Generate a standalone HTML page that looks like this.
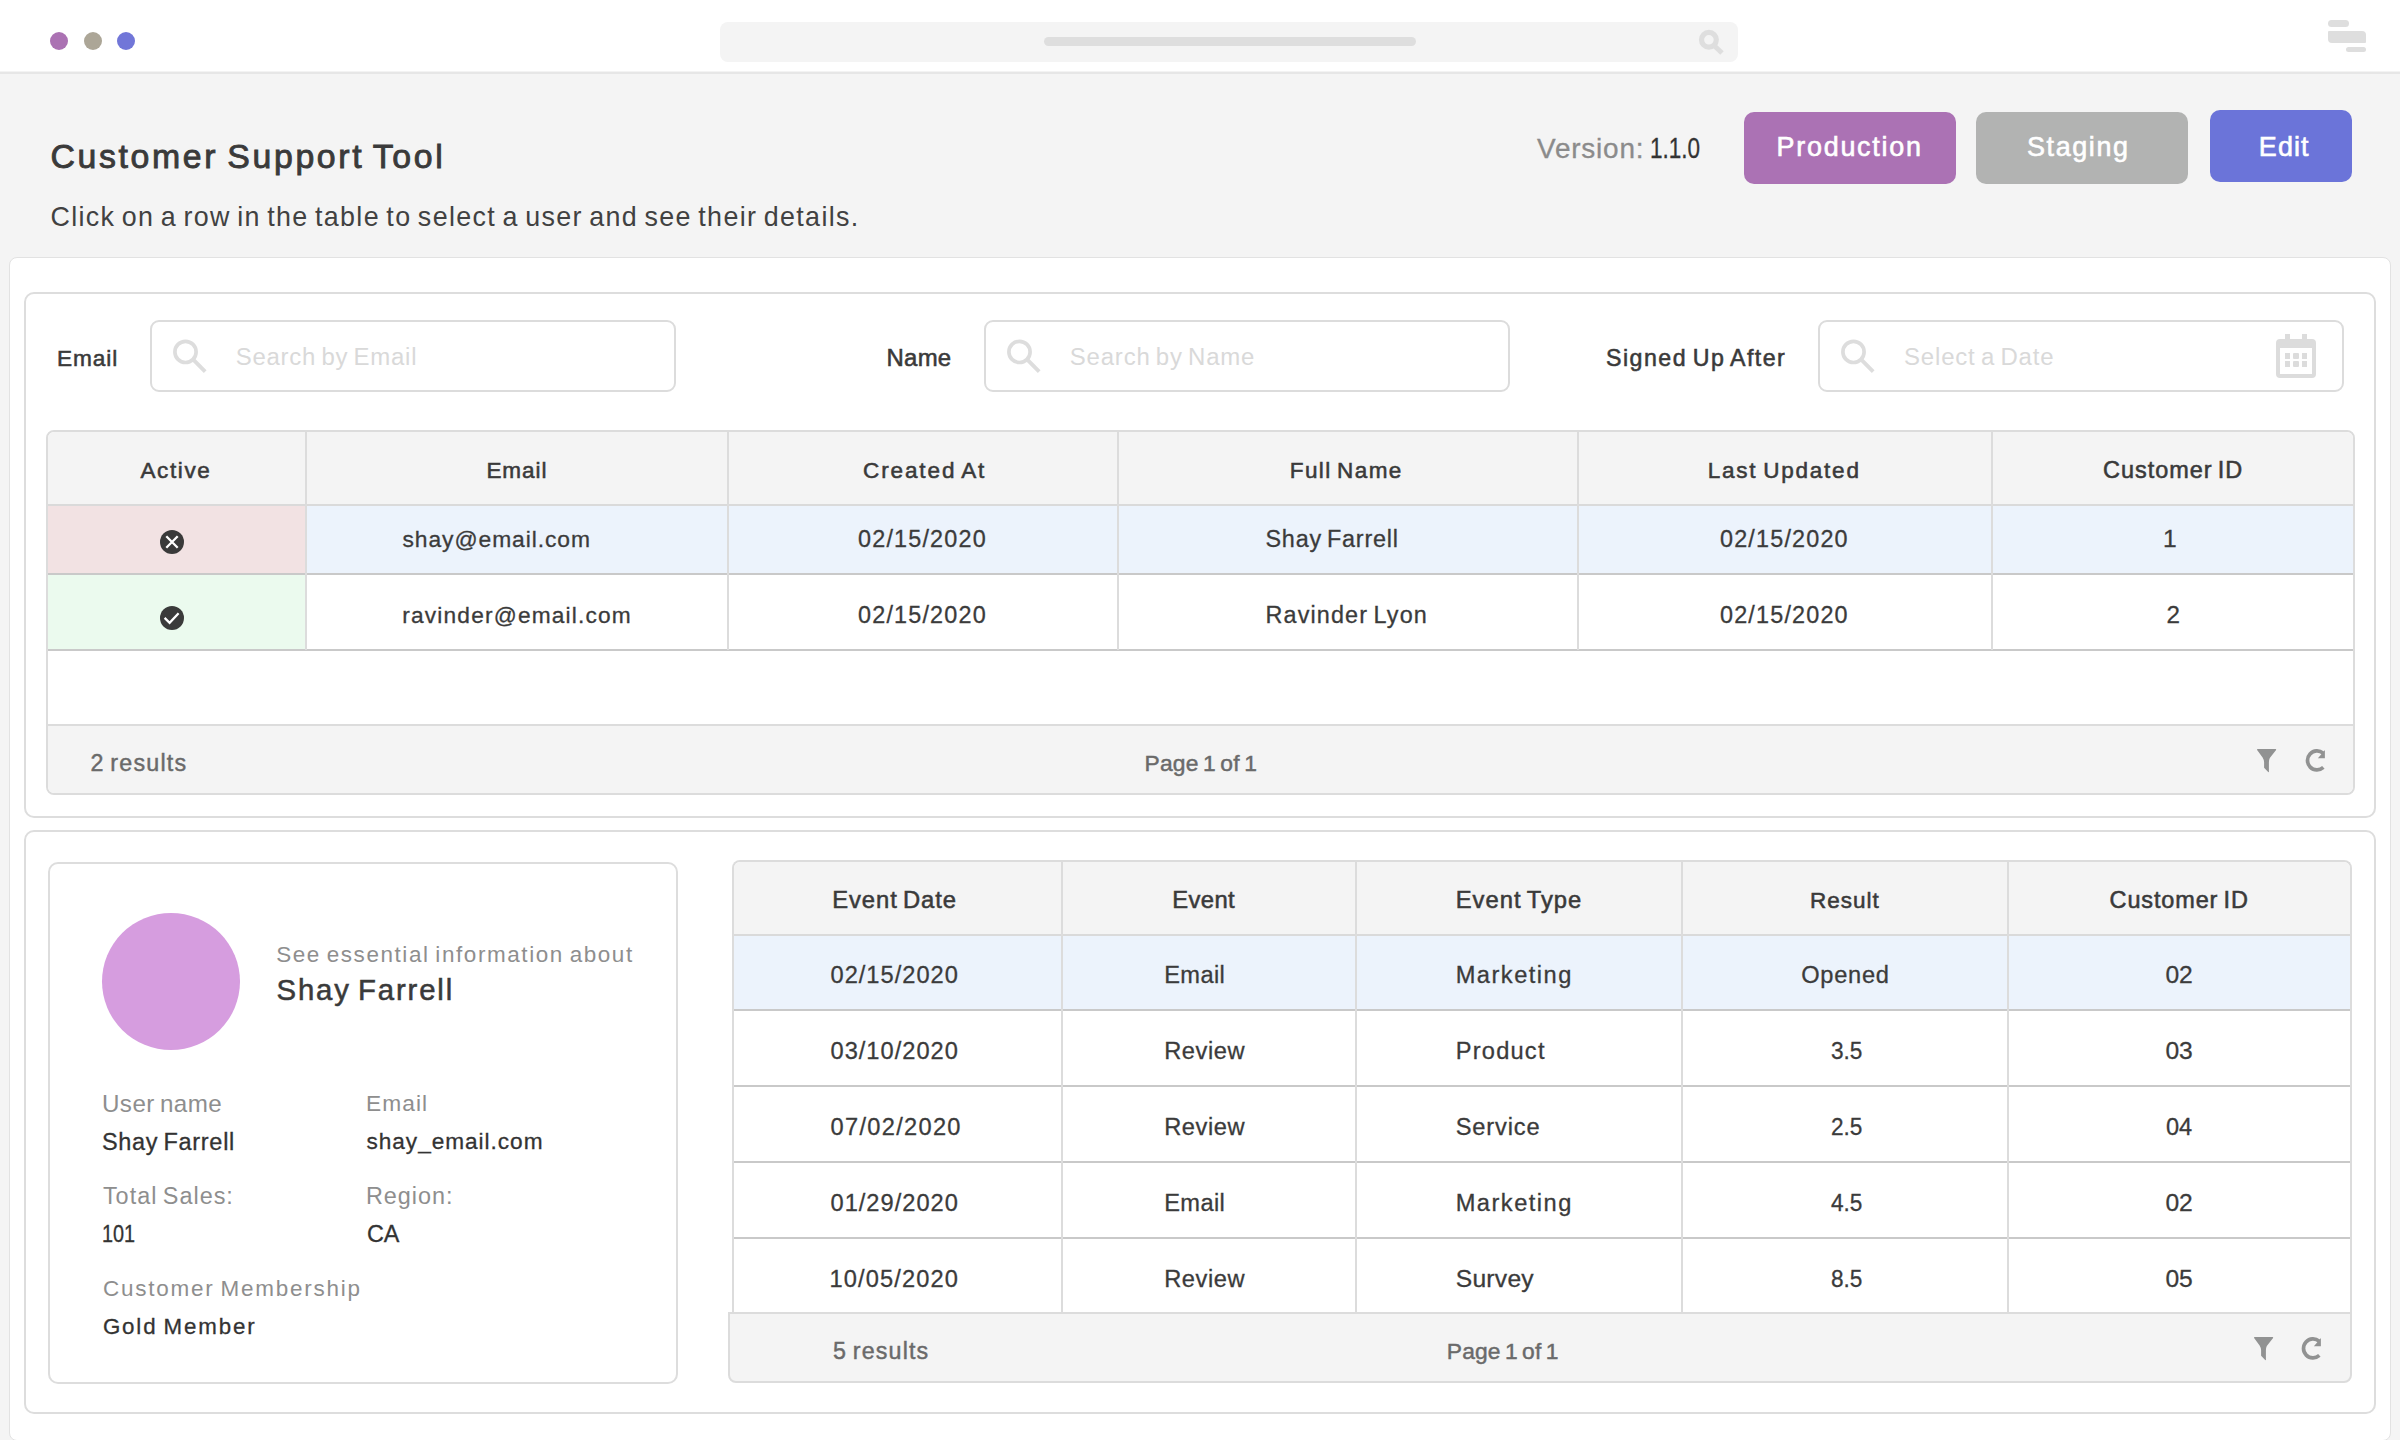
<!DOCTYPE html>
<html><head><meta charset="utf-8"><title>Customer Support Tool</title>
<style>
html,body{margin:0;padding:0;width:2400px;height:1440px;overflow:hidden}
body{width:2400px;height:1440px;overflow:hidden;position:relative;background:#f4f4f4;font-family:"Liberation Sans",sans-serif}
div{position:absolute;box-sizing:content-box}
.t{white-space:nowrap;word-spacing:-0.09em}
</style></head><body>
<div id="root" style="position:relative;left:0;top:0;width:2400px;height:1440px;overflow:hidden">
<div style="left:0px;top:0px;width:2400px;height:72px;background:#fff"></div>
<div style="left:0px;top:71px;width:2400px;height:1px;background:#f3f3f3"></div>
<div style="left:0px;top:72px;width:2400px;height:2px;background:#e6e6e6"></div>
<div style="left:50px;top:32px;width:18px;height:18px;background:#ab72b3;border-radius:50%"></div>
<div style="left:84px;top:32px;width:18px;height:18px;background:#aca697;border-radius:50%"></div>
<div style="left:117px;top:32px;width:18px;height:18px;background:#7176d8;border-radius:50%"></div>
<div style="left:720px;top:22px;width:1018px;height:40px;background:#f4f4f4;border-radius:8px"></div>
<div style="left:1044px;top:37px;width:372px;height:9px;background:#dedede;border-radius:5px"></div>
<svg style="position:absolute;left:1698px;top:28px" width="30" height="30" viewBox="0 0 30 30"><circle cx="10.9" cy="11.8" r="7.4" fill="none" stroke="#dedede" stroke-width="5.2"/><line x1="15.5" y1="17" x2="24" y2="25" stroke="#dedede" stroke-width="5"/></svg>
<div style="left:2328px;top:20px;width:21px;height:7px;background:#dedede;border-radius:4px"></div>
<div style="left:2328px;top:31px;width:38px;height:12px;background:#dedede;border-radius:1px 4px 1px 4px"></div>
<div style="left:2346px;top:47px;width:20px;height:5px;background:#dedede;border-radius:3px"></div>
<div style="left:9px;top:257px;width:2380px;height:1182px;background:#fff;border:1px solid #e2e2e2;border-radius:8px"></div>
<div style="left:24px;top:292px;width:2348px;height:522px;background:#fff;border:2px solid #dddddd;border-radius:10px"></div>
<div style="left:150px;top:320px;width:522px;height:68px;background:#fff;border:2px solid #dcdcdc;border-radius:9px"></div>
<div style="left:984px;top:320px;width:522px;height:68px;background:#fff;border:2px solid #dcdcdc;border-radius:9px"></div>
<div style="left:1818px;top:320px;width:522px;height:68px;background:#fff;border:2px solid #dcdcdc;border-radius:9px"></div>
<svg style="position:absolute;left:172px;top:339px" width="40" height="40" viewBox="0 0 40 40"><circle cx="13.5" cy="12.9" r="10.6" fill="none" stroke="#dddddd" stroke-width="3.7"/><line x1="21" y1="20.4" x2="33.2" y2="32.6" stroke="#dddddd" stroke-width="3.9"/></svg>
<svg style="position:absolute;left:1006px;top:339px" width="40" height="40" viewBox="0 0 40 40"><circle cx="13.5" cy="12.9" r="10.6" fill="none" stroke="#dddddd" stroke-width="3.7"/><line x1="21" y1="20.4" x2="33.2" y2="32.6" stroke="#dddddd" stroke-width="3.9"/></svg>
<svg style="position:absolute;left:1840px;top:339px" width="40" height="40" viewBox="0 0 40 40"><circle cx="13.5" cy="12.9" r="10.6" fill="none" stroke="#dddddd" stroke-width="3.7"/><line x1="21" y1="20.4" x2="33.2" y2="32.6" stroke="#dddddd" stroke-width="3.9"/></svg>
<svg style="position:absolute;left:2276px;top:334px" width="40" height="44" viewBox="0 0 40 44"><rect x="9" y="0" width="5" height="8" fill="#dcdcdc"/><rect x="26" y="0" width="5" height="8" fill="#dcdcdc"/><path d="M4 5 H36 A4 4 0 0 1 40 9 V40 A4 4 0 0 1 36 44 H4 A4 4 0 0 1 0 40 V9 A4 4 0 0 1 4 5 Z M4 14 V40 H36 V14 Z" fill="#dcdcdc" fill-rule="evenodd"/><rect x="9" y="19" width="5" height="6" fill="#dcdcdc"/><rect x="17" y="19" width="6" height="6" rx="1" fill="#dcdcdc"/><rect x="26" y="19" width="5" height="6" fill="#dcdcdc"/><rect x="9" y="27" width="5" height="6" fill="#dcdcdc"/><rect x="17" y="27" width="6" height="6" rx="1" fill="#dcdcdc"/><rect x="26" y="27" width="5" height="6" fill="#dcdcdc"/></svg>
<div style="left:46px;top:430px;width:2305px;height:361px;border:2px solid #dcdcdc;border-radius:8px;overflow:hidden;background:#fff"><div style="left:0px;top:0px;width:2305px;height:72px;background:#f4f4f4"></div><div style="left:0px;top:72px;width:2305px;height:2px;background:#dadada"></div><div style="left:0px;top:74px;width:257px;height:67px;background:#f2e2e3"></div><div style="left:259px;top:74px;width:2046px;height:67px;background:#ecf3fc"></div><div style="left:0px;top:141px;width:2305px;height:2px;background:#c9c9c9"></div><div style="left:0px;top:143px;width:257px;height:74px;background:#ebfaee"></div><div style="left:0px;top:217px;width:2305px;height:2px;background:#c9c9c9"></div><div style="left:0px;top:292px;width:2305px;height:2px;background:#dcdcdc"></div><div style="left:0px;top:294px;width:2305px;height:70px;background:#f4f4f4"></div><div style="left:257px;top:0px;width:2px;height:218px;background:#dcdcdc"></div><div style="left:679px;top:0px;width:2px;height:218px;background:#dcdcdc"></div><div style="left:1069px;top:0px;width:2px;height:218px;background:#dcdcdc"></div><div style="left:1529px;top:0px;width:2px;height:218px;background:#dcdcdc"></div><div style="left:1943px;top:0px;width:2px;height:218px;background:#dcdcdc"></div></div>
<svg style="position:absolute;left:160px;top:530px" width="24" height="24" viewBox="0 0 24 24"><circle cx="12" cy="12" r="12" fill="#3a3a3a"/><path d="M6.3 6.3 L17.7 17.7 M17.7 6.3 L6.3 17.7" stroke="#fff" stroke-width="2.3"/></svg>
<svg style="position:absolute;left:160px;top:606px" width="24" height="24" viewBox="0 0 24 24"><circle cx="12" cy="12" r="12" fill="#3a3a3a"/><path d="M4.6 11.9 L9.6 16.8 L18.6 7.3" fill="none" stroke="#fff" stroke-width="2.3"/></svg>
<svg style="position:absolute;left:2257px;top:749px" width="22" height="26" viewBox="0 0 22 26"><path d="M0.6 0 H18.6 Q19.3 0 19.1 0.9 L12.8 9.1 Q11.9 10.8 11.9 13.4 V22.9 L11.4 23.2 L7.1 18.8 V13.2 Q7.1 10.8 5.6 8.4 L0.1 1.1 Q-0.2 0 0.6 0 Z" fill="#919292"/></svg>
<svg style="position:absolute;left:2304px;top:748px" width="24" height="26" viewBox="0 0 24 26"><path d="M19.36 19.46 A9.5 9.5 0 1 1 19.11 5.12" fill="none" stroke="#919292" stroke-width="3.7"/><path d="M13.9 10.3 H20.9 V2.0 Z" fill="#919292"/></svg>
<div style="left:24px;top:830px;width:2348px;height:580px;background:#fff;border:2px solid #dddddd;border-radius:10px"></div>
<div style="left:48px;top:862px;width:626px;height:518px;background:#fff;border:2px solid #dddddd;border-radius:10px"></div>
<div style="left:102px;top:913px;width:138px;height:137px;background:#d69ddf;border-radius:50%"></div>
<div style="left:732px;top:860px;width:1616px;height:480px;border:2px solid #dcdcdc;border-bottom:none;border-radius:8px 8px 0 0;overflow:hidden;background:#fff"><div style="left:0px;top:0px;width:1616px;height:72px;background:#f4f4f4"></div><div style="left:0px;top:72px;width:1616px;height:2px;background:#dadada"></div><div style="left:0px;top:74px;width:1616px;height:73px;background:#ecf3fc"></div><div style="left:0px;top:147px;width:1616px;height:2px;background:#c9c9c9"></div><div style="left:0px;top:223px;width:1616px;height:2px;background:#c9c9c9"></div><div style="left:0px;top:299px;width:1616px;height:2px;background:#c9c9c9"></div><div style="left:0px;top:375px;width:1616px;height:2px;background:#c9c9c9"></div><div style="left:327px;top:0px;width:2px;height:452px;background:#dcdcdc"></div><div style="left:621px;top:0px;width:2px;height:452px;background:#dcdcdc"></div><div style="left:947px;top:0px;width:2px;height:452px;background:#dcdcdc"></div><div style="left:1273px;top:0px;width:2px;height:452px;background:#dcdcdc"></div></div>
<div style="left:728px;top:1312px;width:1620px;height:67px;background:#f4f4f4;border:2px solid #dcdcdc;border-radius:0 0 8px 8px"></div>
<svg style="position:absolute;left:2254px;top:1337px" width="22" height="26" viewBox="0 0 22 26"><path d="M0.6 0 H18.6 Q19.3 0 19.1 0.9 L12.8 9.1 Q11.9 10.8 11.9 13.4 V22.9 L11.4 23.2 L7.1 18.8 V13.2 Q7.1 10.8 5.6 8.4 L0.1 1.1 Q-0.2 0 0.6 0 Z" fill="#919292"/></svg>
<svg style="position:absolute;left:2300px;top:1336px" width="24" height="26" viewBox="0 0 24 26"><path d="M19.36 19.46 A9.5 9.5 0 1 1 19.11 5.12" fill="none" stroke="#919292" stroke-width="3.7"/><path d="M13.9 10.3 H20.9 V2.0 Z" fill="#919292"/></svg>
<div style="left:1744px;top:112px;width:212px;height:72px;background:#ab72b4;border-radius:10px"></div>
<div style="left:1976px;top:112px;width:212px;height:72px;background:#b2b3b2;border-radius:10px"></div>
<div style="left:2210px;top:110px;width:142px;height:72px;background:#6b74d9;border-radius:10px"></div>
<div class="t" style="left:50.4px;top:140.1px;font-size:33.82px;line-height:33.82px;letter-spacing:2.66px;color:#3a3a3a;-webkit-text-stroke:0.9px #3a3a3a;">Customer Support Tool</div>
<div class="t" style="left:50.4px;top:203.9px;font-size:26.85px;line-height:26.85px;letter-spacing:1.359px;color:#414141;">Click on a row in the table to select a user and see their details.</div>
<div class="t" style="left:1537px;top:135.3px;font-size:27.97px;line-height:27.97px;letter-spacing:0.786px;color:#8b8b8b;-webkit-text-stroke:0.3px #8b8b8b;">Version:</div>
<div class="t" style="left:1649.5px;top:134.3px;font-size:29.15px;line-height:29.15px;letter-spacing:0.0px;color:#333333;-webkit-text-stroke:0.3px #333333;transform:scaleX(0.7734);transform-origin:0 0;">1.1.0</div>
<div class="t" style="left:1776.6px;top:133.9px;font-size:26.93px;line-height:26.93px;letter-spacing:1.733px;color:#ffffff;-webkit-text-stroke:0.6px #ffffff;">Production</div>
<div class="t" style="left:2027px;top:133.9px;font-size:26.93px;line-height:26.93px;letter-spacing:1.617px;color:#ffffff;-webkit-text-stroke:0.6px #ffffff;">Staging</div>
<div class="t" style="left:2258.8px;top:133.9px;font-size:26.93px;line-height:26.93px;letter-spacing:1.133px;color:#ffffff;-webkit-text-stroke:0.6px #ffffff;">Edit</div>
<div class="t" style="left:57px;top:347.2px;font-size:22.67px;line-height:22.67px;letter-spacing:0.925px;color:#3a3a3a;-webkit-text-stroke:0.55px #3a3a3a;">Email</div>
<div class="t" style="left:235.7px;top:344.5px;font-size:23.97px;line-height:23.97px;letter-spacing:0.757px;color:#d9d9d9;">Search by Email</div>
<div class="t" style="left:886.5px;top:346.2px;font-size:23.94px;line-height:23.94px;letter-spacing:0.267px;color:#3a3a3a;-webkit-text-stroke:0.55px #3a3a3a;">Name</div>
<div class="t" style="left:1069.8px;top:344.5px;font-size:23.97px;line-height:23.97px;letter-spacing:0.8px;color:#d9d9d9;">Search by Name</div>
<div class="t" style="left:1606px;top:347.4px;font-size:23.2px;line-height:23.2px;letter-spacing:1.471px;color:#3a3a3a;-webkit-text-stroke:0.55px #3a3a3a;">Signed Up After</div>
<div class="t" style="left:1904px;top:344.5px;font-size:23.97px;line-height:23.97px;letter-spacing:0.833px;color:#d9d9d9;">Select a Date</div>
<div class="t" style="left:140.4px;top:460.3px;font-size:22.53px;line-height:22.53px;letter-spacing:1.62px;color:#3a3a3a;-webkit-text-stroke:0.55px #3a3a3a;">Active</div>
<div class="t" style="left:486.4px;top:460.3px;font-size:22.53px;line-height:22.53px;letter-spacing:0.95px;color:#3a3a3a;-webkit-text-stroke:0.55px #3a3a3a;">Email</div>
<div class="t" style="left:863px;top:460.3px;font-size:22.53px;line-height:22.53px;letter-spacing:1.889px;color:#3a3a3a;-webkit-text-stroke:0.55px #3a3a3a;">Created At</div>
<div class="t" style="left:1289.8px;top:460.3px;font-size:22.53px;line-height:22.53px;letter-spacing:1.363px;color:#3a3a3a;-webkit-text-stroke:0.55px #3a3a3a;">Full Name</div>
<div class="t" style="left:1707.8px;top:460.3px;font-size:22.53px;line-height:22.53px;letter-spacing:1.745px;color:#3a3a3a;-webkit-text-stroke:0.55px #3a3a3a;">Last Updated</div>
<div class="t" style="left:2103px;top:459.3px;font-size:23.47px;line-height:23.47px;letter-spacing:0.97px;color:#3a3a3a;-webkit-text-stroke:0.55px #3a3a3a;">Customer ID</div>
<div class="t" style="left:402.5px;top:527.9px;font-size:22.84px;line-height:22.84px;letter-spacing:0.931px;color:#3b3b3b;-webkit-text-stroke:0.3px #3b3b3b;">shay@email.com</div>
<div class="t" style="left:858px;top:528.3px;font-size:23.38px;line-height:23.38px;letter-spacing:1.189px;color:#3b3b3b;-webkit-text-stroke:0.3px #3b3b3b;">02/15/2020</div>
<div class="t" style="left:1265.5px;top:528.3px;font-size:23.38px;line-height:23.38px;letter-spacing:0.773px;color:#3b3b3b;-webkit-text-stroke:0.3px #3b3b3b;">Shay Farrell</div>
<div class="t" style="left:1720px;top:528.3px;font-size:23.38px;line-height:23.38px;letter-spacing:1.178px;color:#3b3b3b;-webkit-text-stroke:0.3px #3b3b3b;">02/15/2020</div>
<div class="t" style="left:2163.1px;top:527.1px;font-size:24.57px;line-height:24.57px;letter-spacing:0px;color:#3b3b3b;-webkit-text-stroke:0.3px #3b3b3b;">1</div>
<div class="t" style="left:402.3px;top:603.9px;font-size:22.7px;line-height:22.7px;letter-spacing:1.176px;color:#3b3b3b;-webkit-text-stroke:0.3px #3b3b3b;">ravinder@email.com</div>
<div class="t" style="left:858px;top:604.3px;font-size:23.38px;line-height:23.38px;letter-spacing:1.189px;color:#3b3b3b;-webkit-text-stroke:0.3px #3b3b3b;">02/15/2020</div>
<div class="t" style="left:1265.5px;top:604.3px;font-size:23.38px;line-height:23.38px;letter-spacing:1.125px;color:#3b3b3b;-webkit-text-stroke:0.3px #3b3b3b;">Ravinder Lyon</div>
<div class="t" style="left:1720px;top:604.3px;font-size:23.38px;line-height:23.38px;letter-spacing:1.178px;color:#3b3b3b;-webkit-text-stroke:0.3px #3b3b3b;">02/15/2020</div>
<div class="t" style="left:2166.4px;top:603.2px;font-size:24.23px;line-height:24.23px;letter-spacing:0px;color:#3b3b3b;-webkit-text-stroke:0.3px #3b3b3b;">2</div>
<div class="t" style="left:90.6px;top:752.0px;font-size:23.31px;line-height:23.31px;letter-spacing:1.206px;color:#6a6a6a;-webkit-text-stroke:0.45px #6a6a6a;">2 results</div>
<div class="t" style="left:1144.6px;top:751.9px;font-size:22.84px;line-height:22.84px;letter-spacing:0.17px;color:#6a6a6a;-webkit-text-stroke:0.45px #6a6a6a;">Page 1 of 1</div>
<div class="t" style="left:276.2px;top:943.7px;font-size:22.47px;line-height:22.47px;letter-spacing:1.577px;color:#8e8e8e;">See essential information about</div>
<div class="t" style="left:276.5px;top:975.0px;font-size:29.33px;line-height:29.33px;letter-spacing:1.836px;color:#3a3a3a;-webkit-text-stroke:0.55px #3a3a3a;">Shay Farrell</div>
<div class="t" style="left:101.9px;top:1092.3px;font-size:24.2px;line-height:24.2px;letter-spacing:0.475px;color:#8e8e8e;">User name</div>
<div class="t" style="left:366px;top:1091.8px;font-size:22.74px;line-height:22.74px;letter-spacing:1.075px;color:#8e8e8e;">Email</div>
<div class="t" style="left:101.9px;top:1131.4px;font-size:23.51px;line-height:23.51px;letter-spacing:0.714px;color:#333333;-webkit-text-stroke:0.3px #333333;">Shay Farrell</div>
<div class="t" style="left:366.5px;top:1130.8px;font-size:22.64px;line-height:22.64px;letter-spacing:0.962px;color:#333333;-webkit-text-stroke:0.3px #333333;">shay_email.com</div>
<div class="t" style="left:102.9px;top:1185.4px;font-size:23.42px;line-height:23.42px;letter-spacing:1.009px;color:#8e8e8e;">Total Sales:</div>
<div class="t" style="left:366px;top:1185.4px;font-size:23.42px;line-height:23.42px;letter-spacing:0.967px;color:#8e8e8e;">Region:</div>
<div class="t" style="left:101.9px;top:1223.0px;font-size:23.38px;line-height:23.38px;letter-spacing:0.0px;color:#333333;-webkit-text-stroke:0.3px #333333;transform:scaleX(0.85);transform-origin:0 0;">101</div>
<div class="t" style="left:367px;top:1223.0px;font-size:23.38px;line-height:23.38px;letter-spacing:-0.2px;color:#333333;-webkit-text-stroke:0.3px #333333;">CA</div>
<div class="t" style="left:102.9px;top:1278.0px;font-size:22.47px;line-height:22.47px;letter-spacing:1.772px;color:#8e8e8e;">Customer Membership</div>
<div class="t" style="left:102.9px;top:1316.0px;font-size:22.3px;line-height:22.3px;letter-spacing:1.87px;color:#333333;-webkit-text-stroke:0.3px #333333;">Gold Member</div>
<div class="t" style="left:832.3px;top:887.8px;font-size:23.8px;line-height:23.8px;letter-spacing:0.9px;color:#3a3a3a;-webkit-text-stroke:0.55px #3a3a3a;">Event Date</div>
<div class="t" style="left:1172.3px;top:887.8px;font-size:23.8px;line-height:23.8px;letter-spacing:0.375px;color:#3a3a3a;-webkit-text-stroke:0.55px #3a3a3a;">Event</div>
<div class="t" style="left:1455.7px;top:887.8px;font-size:23.8px;line-height:23.8px;letter-spacing:1.011px;color:#3a3a3a;-webkit-text-stroke:0.55px #3a3a3a;">Event Type</div>
<div class="t" style="left:1810px;top:889.8px;font-size:22.53px;line-height:22.53px;letter-spacing:0.98px;color:#3a3a3a;-webkit-text-stroke:0.55px #3a3a3a;">Result</div>
<div class="t" style="left:2109.6px;top:888.8px;font-size:23.47px;line-height:23.47px;letter-spacing:0.87px;color:#3a3a3a;-webkit-text-stroke:0.55px #3a3a3a;">Customer ID</div>
<div class="t" style="left:830.5px;top:963.5px;font-size:23.65px;line-height:23.65px;letter-spacing:1.0px;color:#3b3b3b;-webkit-text-stroke:0.3px #3b3b3b;">02/15/2020</div>
<div class="t" style="left:1164.2px;top:963.5px;font-size:23.65px;line-height:23.65px;letter-spacing:0.375px;color:#3b3b3b;-webkit-text-stroke:0.3px #3b3b3b;">Email</div>
<div class="t" style="left:1455.7px;top:963.5px;font-size:23.65px;line-height:23.65px;letter-spacing:1.487px;color:#3b3b3b;-webkit-text-stroke:0.3px #3b3b3b;">Marketing</div>
<div class="t" style="left:1801.2px;top:963.5px;font-size:23.65px;line-height:23.65px;letter-spacing:0.72px;color:#3b3b3b;-webkit-text-stroke:0.3px #3b3b3b;">Opened</div>
<div class="t" style="left:2165.5px;top:962.5px;font-size:24.65px;line-height:24.65px;letter-spacing:-0.2px;color:#3b3b3b;-webkit-text-stroke:0.3px #3b3b3b;">02</div>
<div class="t" style="left:830.5px;top:1039.5px;font-size:23.65px;line-height:23.65px;letter-spacing:1.0px;color:#3b3b3b;-webkit-text-stroke:0.3px #3b3b3b;">03/10/2020</div>
<div class="t" style="left:1164.2px;top:1039.5px;font-size:23.65px;line-height:23.65px;letter-spacing:0.56px;color:#3b3b3b;-webkit-text-stroke:0.3px #3b3b3b;">Review</div>
<div class="t" style="left:1455.7px;top:1039.5px;font-size:23.65px;line-height:23.65px;letter-spacing:1.217px;color:#3b3b3b;-webkit-text-stroke:0.3px #3b3b3b;">Product</div>
<div class="t" style="left:1830.8px;top:1038.5px;font-size:24.65px;line-height:24.65px;letter-spacing:0.0px;color:#3b3b3b;-webkit-text-stroke:0.3px #3b3b3b;transform:scaleX(0.9176);transform-origin:0 0;">3.5</div>
<div class="t" style="left:2165.5px;top:1038.5px;font-size:24.65px;line-height:24.65px;letter-spacing:-0.2px;color:#3b3b3b;-webkit-text-stroke:0.3px #3b3b3b;">03</div>
<div class="t" style="left:830.5px;top:1115.5px;font-size:23.65px;line-height:23.65px;letter-spacing:1.3px;color:#3b3b3b;-webkit-text-stroke:0.3px #3b3b3b;">07/02/2020</div>
<div class="t" style="left:1164.2px;top:1115.5px;font-size:23.65px;line-height:23.65px;letter-spacing:0.56px;color:#3b3b3b;-webkit-text-stroke:0.3px #3b3b3b;">Review</div>
<div class="t" style="left:1455.7px;top:1115.5px;font-size:23.65px;line-height:23.65px;letter-spacing:0.85px;color:#3b3b3b;-webkit-text-stroke:0.3px #3b3b3b;">Service</div>
<div class="t" style="left:1830.8px;top:1114.5px;font-size:24.65px;line-height:24.65px;letter-spacing:0.0px;color:#3b3b3b;-webkit-text-stroke:0.3px #3b3b3b;transform:scaleX(0.9176);transform-origin:0 0;">2.5</div>
<div class="t" style="left:2165.5px;top:1114.5px;font-size:24.65px;line-height:24.65px;letter-spacing:0.0px;color:#3b3b3b;-webkit-text-stroke:0.3px #3b3b3b;transform:scaleX(0.9571);transform-origin:0 0;">04</div>
<div class="t" style="left:830.5px;top:1191.5px;font-size:23.65px;line-height:23.65px;letter-spacing:1.0px;color:#3b3b3b;-webkit-text-stroke:0.3px #3b3b3b;">01/29/2020</div>
<div class="t" style="left:1164.2px;top:1191.5px;font-size:23.65px;line-height:23.65px;letter-spacing:0.375px;color:#3b3b3b;-webkit-text-stroke:0.3px #3b3b3b;">Email</div>
<div class="t" style="left:1455.7px;top:1191.5px;font-size:23.65px;line-height:23.65px;letter-spacing:1.487px;color:#3b3b3b;-webkit-text-stroke:0.3px #3b3b3b;">Marketing</div>
<div class="t" style="left:1830.8px;top:1190.5px;font-size:24.65px;line-height:24.65px;letter-spacing:0.0px;color:#3b3b3b;-webkit-text-stroke:0.3px #3b3b3b;transform:scaleX(0.9176);transform-origin:0 0;">4.5</div>
<div class="t" style="left:2165.5px;top:1190.5px;font-size:24.65px;line-height:24.65px;letter-spacing:-0.2px;color:#3b3b3b;-webkit-text-stroke:0.3px #3b3b3b;">02</div>
<div class="t" style="left:829.5px;top:1267.5px;font-size:23.65px;line-height:23.65px;letter-spacing:1.111px;color:#3b3b3b;-webkit-text-stroke:0.3px #3b3b3b;">10/05/2020</div>
<div class="t" style="left:1164.2px;top:1267.5px;font-size:23.65px;line-height:23.65px;letter-spacing:0.56px;color:#3b3b3b;-webkit-text-stroke:0.3px #3b3b3b;">Review</div>
<div class="t" style="left:1455.7px;top:1266.5px;font-size:24.65px;line-height:24.65px;letter-spacing:0.26px;color:#3b3b3b;-webkit-text-stroke:0.3px #3b3b3b;">Survey</div>
<div class="t" style="left:1830.8px;top:1266.5px;font-size:24.65px;line-height:24.65px;letter-spacing:0.0px;color:#3b3b3b;-webkit-text-stroke:0.3px #3b3b3b;transform:scaleX(0.9176);transform-origin:0 0;">8.5</div>
<div class="t" style="left:2165.5px;top:1266.5px;font-size:24.65px;line-height:24.65px;letter-spacing:-0.2px;color:#3b3b3b;-webkit-text-stroke:0.3px #3b3b3b;">05</div>
<div class="t" style="left:833.1px;top:1340.1px;font-size:23.24px;line-height:23.24px;letter-spacing:1.175px;color:#6a6a6a;-webkit-text-stroke:0.45px #6a6a6a;">5 results</div>
<div class="t" style="left:1446.8px;top:1340.0px;font-size:22.84px;line-height:22.84px;letter-spacing:0.105px;color:#6a6a6a;-webkit-text-stroke:0.45px #6a6a6a;">Page 1 of 1</div>
</div>
</body></html>
